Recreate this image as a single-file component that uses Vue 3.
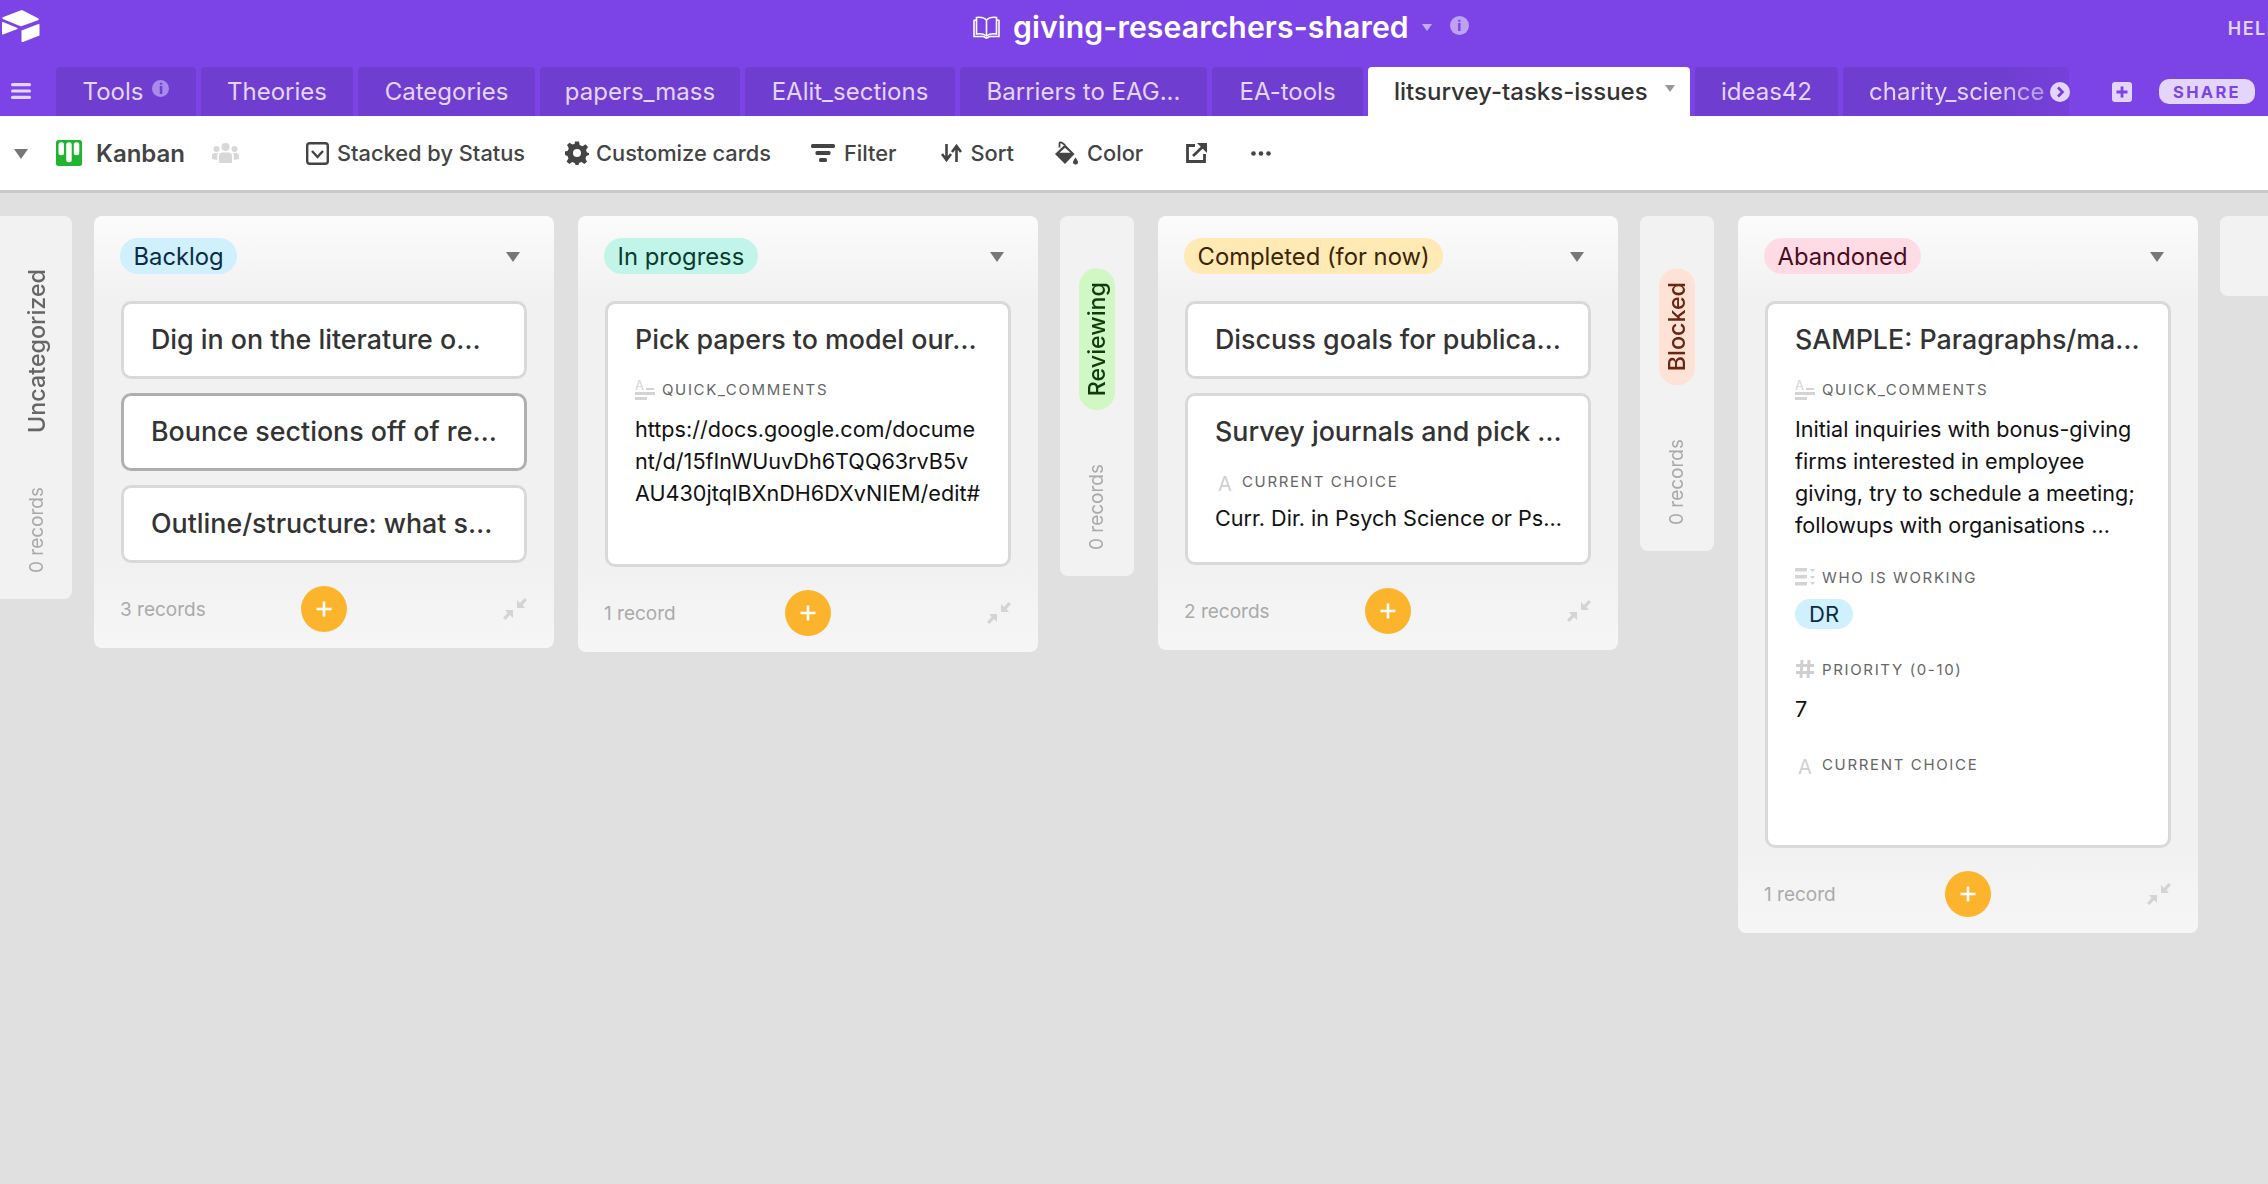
<template>
  <div class="page">
    <header class="topbar">
      <svg class="logo" viewBox="0 0 38 32" width="38" height="32" fill="#fff">
        <path d="M20.500 0.300 L36.500 8.500 Q37.500 9.500 36 10.300 L20 16 Q19 16.300 18 16 L0.800 9 Q0 8 0.800 7.300 L19 0.300 Q20 0 20.500 0.300 Z" />
        <path d="M0 12.500 Q0 11.600 1 12 L15.500 18 Q16.300 18.500 15.500 19 L1 24.500 Q0 24.800 0 23.800 Z" />
        <path d="M19.500 20.500 L36.500 14 Q37.500 13.800 37.500 14.800 L37.500 25.600 L21 32 Q19.500 32.300 19.500 31 Z" />
      </svg>
      <div class="base-title">
        <svg class="book" viewBox="0 0 27 23" width="27" height="23" fill="none" stroke="#fff" stroke-width="1.600">
          <path d="M13.500 4 C11 1.500 7 1 3.500 1.500 L3.500 18 C7 17.500 11 18 13.500 20 C16 18 20 17.500 23.500 18 L23.500 1.500 C20 1 16 1.500 13.500 4 Z" />
          <path d="M13.500 4 L13.500 20 M3.500 4 L1 4.500 L1 20.500 L10.500 20.500 L13.500 22.300 L16.500 20.500 L26 20.500 L26 4.500 L23.500 4" />
        </svg>
        <span class="base-name">giving-researchers-shared</span>
        <span class="tri small"></span>
        <span class="info big">i</span>
      </div>
      <span class="help">HELP</span>
    </header>

    <nav class="tabbar">
      <svg class="burger" viewBox="0 0 20 16" width="20" height="16" fill="#e3d5fb">
        <rect y="0" width="20" height="3.200" rx="1.500" />
        <rect y="6.400" width="20" height="3.200" rx="1.500" />
        <rect y="12.800" width="20" height="3.200" rx="1.500" />
      </svg>
      <div
        v-for="t in tabs"
        :key="t.name"
        class="tab"
        :class="{ active: t.active, fade: t.more }"
        :style="{ width: t.w + 'px' }"
      >
        <span class="tab-name">{{ t.name }}</span>
        <span v-if="t.info" class="info">i</span>
        <span v-if="t.active" class="tri grey"></span>
        <svg v-if="t.more" class="more" viewBox="0 0 20 20" width="20" height="20">
          <circle cx="10" cy="10" r="10" fill="#e3d5fb" />
          <path d="M8 5.500 L12.500 10 L8 14.500" fill="none" stroke="#703dd1" stroke-width="2.600" />
        </svg>
      </div>
      <svg class="add" viewBox="0 0 20 20" width="20" height="20">
        <rect width="20" height="20" rx="3" fill="#e3d5fb" />
        <path d="M10 4.500 V15.500 M4.500 10 H15.500" stroke="#7c44e6" stroke-width="2.800" />
      </svg>
      <button class="share">SHARE</button>
    </nav>

    <div class="toolbar">
      <span class="tri view-caret"></span>
      <svg class="kanban" viewBox="0 0 26 26" width="26" height="26">
        <rect width="26" height="26" rx="2.500" fill="#20b52e" />
        <rect x="2.500" y="2.300" width="5.500" height="13" rx="2.500" fill="#fff" />
        <rect x="10.200" y="2.300" width="5.500" height="20" rx="2.500" fill="#fff" />
        <rect x="17.800" y="2.300" width="5.500" height="13" rx="2.500" fill="#fff" />
      </svg>
      <span class="view-name">Kanban</span>
      <svg class="people" viewBox="0 0 27 20" width="27" height="20" fill="#d8d8d8">
        <circle cx="13.500" cy="4" r="4" />
        <circle cx="4.500" cy="6" r="3" />
        <circle cx="22.500" cy="6" r="3" />
        <path d="M7 20 V13 Q7 9.500 10.500 9.500 H16.500 Q20 9.500 20 13 V20 Z" />
        <path d="M0 16 V12.500 Q0 10 3 10 H6 Q5.200 11 5.200 13 V17 Z M27 16 V12.500 Q27 10 24 10 H21 Q21.800 11 21.800 13 V17 Z" />
      </svg>
      <span class="tool stacked">
        <svg viewBox="0 0 23 23" width="23" height="23" fill="none" stroke="#444" stroke-width="2.400">
          <rect x="1.200" y="1.200" width="20.600" height="20.600" rx="2.500" />
          <path d="M6 9 L11.500 15 L17 9" />
        </svg>
        Stacked by Status
      </span>
      <span class="tool custom">
        <svg viewBox="0 0 24 24" width="24" height="24" fill="#444">
          <path d="M10 0.500 H14 L14.700 4 L17.500 5.200 L20.500 3.200 L23 6 L21 9 L22 11.600 L24 12 V14 L21.300 15 L20.500 17.700 L22 20.700 L19.300 23 L16.500 21 L14 22 L13.500 24 H10.500 L9.800 22 L7.200 21 L4.300 23 L1.500 20.500 L3.500 17.500 L2.500 15 L0 14 V10.500 L2.800 9.700 L3.800 7.300 L2 4 L4.500 1.800 L7.500 3.500 L9.700 2.700 Z M12 8 A4 4 0 1 0 12 16 A4 4 0 1 0 12 8 Z" fill-rule="evenodd" />
        </svg>
        Customize cards
      </span>
      <span class="tool filter">
        <svg viewBox="0 0 24 18" width="24" height="18" fill="#444">
          <rect width="24" height="4" rx="1.500" />
          <rect x="4.500" y="7" width="15" height="4" rx="1.500" />
          <rect x="8" y="14" width="8" height="4" rx="1.500" />
        </svg>
        Filter
      </span>
      <span class="tool sort">
        <svg viewBox="0 0 21 18" width="21" height="18" fill="none" stroke="#444" stroke-width="2.600">
          <path d="M5.500 0 V15 M1 10 L5.500 16 L10 10" />
          <path d="M15.500 18 V3 M11 8 L15.500 2 L20 8" />
        </svg>
        Sort
      </span>
      <span class="tool color">
        <svg viewBox="0 0 24 24" width="24" height="24">
          <path d="M11 3.500 L20.500 13 L11 23 L1 13 Z" fill="#444" />
          <path d="M11 6.800 L16.500 11.800 H5.500 Z" fill="#fff" />
          <path d="M5.500 6.500 V2.500 Q5.500 0.800 7.500 1.500 L11 4" fill="none" stroke="#444" stroke-width="1.800" />
          <path d="M21.500 16.500 Q24 20 24 21 A2.500 2.500 0 0 1 19 21 Q19 20 21.500 16.500 Z" fill="#444" />
        </svg>
        Color
      </span>
      <svg class="export" viewBox="0 0 21 20" width="21" height="20" fill="none" stroke="#444" stroke-width="2.800">
        <path d="M9 2.500 H1.500 V18.500 H18.500 V11" />
        <path d="M7 13 L18 2.500" />
        <path d="M11 0 H21 V10 Z" fill="#444" stroke="none" />
      </svg>
      <svg class="dots" viewBox="0 0 20 5" width="20" height="5" fill="#444">
        <circle cx="2.500" cy="2.500" r="2.300" />
        <circle cx="10" cy="2.500" r="2.300" />
        <circle cx="17.500" cy="2.500" r="2.300" />
      </svg>
    </div>

    <main class="board">
      <template v-for="(col, i) in columns" :key="i">
        <section v-if="col.stack" class="stack" :class="col.cls">
          <span v-if="col.pill" class="pill vertical" :class="col.pill">{{ col.name }}</span>
          <span v-else class="plain-name">{{ col.name }}</span>
          <span class="stack-count">0 records</span>
        </section>

        <section v-else class="col" :class="col.cls">
          <div class="col-head">
            <span class="pill" :class="col.pill">{{ col.name }}</span>
            <span class="tri grey head-caret"></span>
          </div>
          <div class="cards">
            <article v-for="card in col.cards" :key="card.title" class="card" :class="{ hover: card.hover }">
              <h3 class="card-title">{{ card.title }}</h3>
              <div v-for="f in card.fields || []" :key="f.label" class="field">
                <div class="field-label">
                  <span v-if="f.icon === 'long'" class="icon-long">
                    <span class="icon-long-a">A</span>
                    <i class="bar dash"></i>
                    <i class="bar wide"></i>
                    <i class="bar short"></i>
                  </span>
                  <svg v-else-if="f.icon === 'select'" viewBox="0 0 20 18" width="20" height="18" fill="#d4d4d4">
                    <rect y="0" width="12" height="3.500" />
                    <rect y="7" width="12" height="3.500" />
                    <rect y="14" width="12" height="3.500" />
                    <path d="M15 1 H20 L17.500 4 Z M15 8 H20 L17.500 11 Z M15 14 H20 L17.500 17 Z" />
                  </svg>
                  <svg v-else-if="f.icon === 'num'" viewBox="0 0 20 18" width="20" height="18" fill="none" stroke="#d0d0d0" stroke-width="3">
                    <path d="M7 0 L6 18 M14 0 L13 18 M1 5.500 H19 M1 12.500 H19" />
                  </svg>
                  <span v-else class="icon-a">A</span>
                  <span>{{ f.label }}</span>
                </div>
                <span v-if="f.tag" class="tag">{{ f.tag }}</span>
                <div v-else class="value" :class="f.cls">
                  <div v-for="line in f.lines" :key="line">{{ line }}</div>
                </div>
              </div>
            </article>
          </div>
          <div class="col-foot">
            <span class="count">{{ col.count }}</span>
            <button class="plus">
              <svg viewBox="0 0 16 16" width="16" height="16">
                <path d="M8 0.500 V15.500 M0.500 8 H15.500" stroke="#fff" stroke-width="2.600" />
              </svg>
            </button>
            <svg class="collapse" viewBox="0 0 24 22" width="24" height="22" fill="#d4d4d4">
              <path d="M14 10 V2 L17 5 L21.500 0 L24 2 L19.500 7 L22 10 Z" />
              <path d="M10 12 V20 L7 17 L2.500 22 L0 20 L4.500 15 L2 12 Z" />
            </svg>
          </div>
        </section>
      </template>
      <section class="stack next"></section>
    </main>
  </div>
</template>

<script setup>
const tabs = [
  { name: 'Tools', w: 140, info: true },
  { name: 'Theories', w: 152 },
  { name: 'Categories', w: 177 },
  { name: 'papers_mass', w: 200 },
  { name: 'EAlit_sections', w: 210 },
  { name: 'Barriers to EAG...', w: 247 },
  { name: 'EA-tools', w: 151 },
  { name: 'litsurvey-tasks-issues', w: 322, active: true },
  { name: 'ideas42', w: 143 },
  { name: 'charity_science', w: 226, more: true },
]

const comments = {
  icon: 'long',
  label: 'QUICK_COMMENTS',
}

const columns = [
  { stack: true, name: 'Uncategorized', cls: 'first' },
  {
    name: 'Backlog',
    pill: 'blue',
    cls: 'after-first',
    count: '3 records',
    cards: [
      { title: 'Dig in on the literature o…' },
      { title: 'Bounce sections off of re…', hover: true },
      { title: 'Outline/structure: what s…' },
    ],
  },
  {
    name: 'In progress',
    pill: 'teal',
    count: '1 record',
    cards: [
      {
        title: 'Pick papers to model our…',
        fields: [
          {
            ...comments,
            cls: 'tall',
            lines: ['https://docs.google.com/docume', 'nt/d/15fInWUuvDh6TQQ63rvB5v', 'AU430jtqIBXnDH6DXvNIEM/edit#'],
          },
        ],
      },
    ],
  },
  { stack: true, name: 'Reviewing', pill: 'green' },
  {
    name: 'Completed (for now)',
    pill: 'yellow',
    count: '2 records',
    cards: [
      { title: 'Discuss goals for publica…' },
      {
        title: 'Survey journals and pick …',
        fields: [
          { icon: 'text', label: 'CURRENT CHOICE', cls: 'single', lines: ['Curr. Dir. in Psych Science or Ps…'] },
        ],
      },
    ],
  },
  { stack: true, name: 'Blocked', pill: 'orange' },
  {
    name: 'Abandoned',
    pill: 'pink',
    count: '1 record',
    cards: [
      {
        title: 'SAMPLE: Paragraphs/ma…',
        fields: [
          {
            ...comments,
            lines: [
              'Initial inquiries with bonus-giving',
              'firms interested in employee',
              'giving, try to schedule a meeting;',
              'followups with organisations …',
            ],
          },
          { icon: 'select', label: 'WHO IS WORKING', tag: 'DR' },
          { icon: 'num', label: 'PRIORITY (0-10)', cls: 'num-value', lines: ['7'] },
          { icon: 'text', label: 'CURRENT CHOICE', cls: 'single', lines: ['\u00a0'] },
        ],
      },
    ],
  },
]
</script>

<style scoped>
.page {
  height: 1184px;
  overflow: hidden;
  background: #e0e0e0;
  font-family: Inter, "Liberation Sans", sans-serif;
  color: #333;
}

/* 顶部 */
.topbar {
  height: 67px;
  background: #7c44e6;
  display: flex;
  color: #fff;
  white-space: nowrap;
}
.logo {
  flex: none;
  margin: 10px 0 0 2px;
}
.base-title {
  flex: none;
  margin-left: 933px;
  display: flex;
  align-items: center;
  height: 54px;
}
.base-name {
  margin-left: 13px;
  font-size: 30.200px;
  font-weight: 600;
  letter-spacing: 0.100px;
}
.tri {
  display: inline-block;
  width: 0;
  height: 0;
  border-left: 7px solid transparent;
  border-right: 7px solid transparent;
  border-top: 10px solid #777;
}
.tri.small {
  margin-left: 13px;
  border-left-width: 5px;
  border-right-width: 5px;
  border-top: 7px solid #c7acf4;
}
.info {
  display: inline-block;
  width: 17px;
  height: 17px;
  border-radius: 50%;
  background: #a98ae9;
  color: #703dd1;
  font-size: 14px;
  font-weight: 800;
  line-height: 17px;
  text-align: center;
}
.info.big {
  margin-left: 18px;
  margin-bottom: 4px;
  width: 19px;
  height: 19px;
  line-height: 19px;
  background: #bca2f0;
  color: #7c44e6;
}
.help {
  flex: none;
  margin-left: 759px;
  padding-top: 18px;
  font-size: 18px;
  font-weight: 600;
  letter-spacing: 1.500px;
  color: #e3d5fb;
}

/* 标签栏 */
.tabbar {
  height: 49px;
  background: #7c44e6;
  display: flex;
  align-items: flex-end;
  gap: 5px;
  padding-left: 56px;
  position: relative;
  white-space: nowrap;
}
.burger {
  position: absolute;
  left: 11px;
  top: 16px;
}
.tab {
  height: 49px;
  box-sizing: border-box;
  flex: none;
  display: flex;
  align-items: center;
  justify-content: center;
  gap: 9px;
  background: #703dd1;
  border-radius: 4px 4px 0 0;
  color: #e3d5fb;
  font-size: 24px;
  position: relative;
}
.tab .info {
  margin-bottom: 7px;
}
.tab.active {
  background: #fff;
  color: #333;
  font-weight: 500;
  justify-content: flex-start;
  padding-left: 26px;
}
.tab.active .tri {
  position: absolute;
  right: 15px;
  top: 18px;
  border-left-width: 5px;
  border-right-width: 5px;
  border-top-width: 7px;
  border-top-color: #999;
}
.tab.fade {
  background: linear-gradient(90deg, #703dd1 70%, #7640da 100%);
  justify-content: flex-start;
  padding-left: 26px;
  gap: 5px;
}
.tab.fade .tab-name {
  -webkit-mask-image: linear-gradient(90deg, #000 70%, rgba(0, 0, 0, 0.55) 100%);
  mask-image: linear-gradient(90deg, #000 70%, rgba(0, 0, 0, 0.55) 100%);
}
.more {
  flex: none;
}
.add {
  margin: 0 0 14px 38px;
}
.share {
  margin: 0 0 12px 22px;
  width: 96px;
  height: 25px;
  padding: 0;
  border: none;
  border-radius: 10px;
  background: #e3d5fb;
  color: #7c44e6;
  font-family: inherit;
  font-size: 16.500px;
  font-weight: 700;
  letter-spacing: 2.300px;
}

/* 工具栏 */
.toolbar {
  height: 74px;
  background: #fff;
  border-bottom: 3px solid #c9c9c9;
  display: flex;
  align-items: center;
  white-space: nowrap;
  color: #444;
  font-size: 21.800px;
  font-weight: 500;
}
.view-caret {
  margin-left: 14px;
  margin-top: 2px;
}
.kanban {
  margin-left: 28px;
}
.view-name {
  margin-left: 14px;
  font-size: 24px;
  font-weight: 600;
}
.people {
  margin-left: 27px;
}
.tool {
  display: flex;
  align-items: center;
  gap: 9px;
}
.stacked {
  margin-left: 67px;
  gap: 8px;
}
.custom {
  margin-left: 40px;
  gap: 7px;
}
.filter {
  margin-left: 40px;
}
.sort {
  margin-left: 44px;
}
.color {
  margin-left: 40px;
}
.export {
  margin-left: 43px;
}
.dots {
  margin-left: 44px;
}

/* 看板 */
.board {
  display: flex;
  align-items: flex-start;
  padding-top: 23px;
  white-space: nowrap;
}
.col {
  flex: none;
  width: 460px;
  margin-left: 24px;
  border-radius: 8px;
  background: linear-gradient(180deg, #fbfbfb 0, #f1f1f1 85px, #f1f1f1 calc(100% - 85px), #f6f6f6 100%);
}
.col.after-first {
  margin-left: 22px;
}
.col-head {
  height: 85px;
  box-sizing: border-box;
  padding: 22px 27px 0 26px;
  display: flex;
  justify-content: space-between;
  align-items: flex-start;
}
.head-caret {
  margin: 14px 7px 0 0;
}
.pill {
  height: 36px;
  line-height: 37px;
  padding: 0 13.500px;
  border-radius: 18px;
  font-size: 23.800px;
  display: inline-block;
}
.blue { background: #d0f0fd; color: #0b2c45; }
.teal { background: #c2f5e9; color: #0b3b2e; }
.green { background: #d1f7c4; color: #0f3d0a; }
.yellow { background: #ffeab6; color: #3b2501; }
.orange { background: #fee2d5; color: #6b2613; }
.pink { background: #ffdce5; color: #4c0c1c; }

.cards {
  padding: 0 27px;
  display: flex;
  flex-direction: column;
  gap: 14px;
}
.card {
  box-sizing: border-box;
  border: 3px solid #d9d9d9;
  border-radius: 10px;
  background: #fff;
  padding: 0 0 0 27px;
}
.card:has(.field) {
  padding-bottom: 28px;
}
.card.hover {
  border-color: #b0b0b0;
}
.card-title {
  margin: 0;
  padding: 21px 0 23px;
  height: 72px;
  box-sizing: border-box;
  font-size: 26.800px;
  line-height: 28px;
  font-weight: 500;
  color: #333;
}
.field {
  margin-top: 26px;
}
.field:first-of-type {
  margin-top: 3px;
}
.field-label {
  height: 20px;
  display: flex;
  align-items: center;
  gap: 7px;
  font-size: 15px;
  font-weight: 400;
  letter-spacing: 1.650px;
  color: #666;
}
.icon-long {
  flex: none;
  position: relative;
  width: 20px;
  height: 20px;
}
.icon-long-a {
  position: absolute;
  left: 0;
  top: -2px;
  font-size: 13px;
  line-height: 16px;
  letter-spacing: 0;
  color: #d4d4d4;
}
.bar {
  position: absolute;
  background: #d4d4d4;
  height: 3px;
}
.bar.dash {
  left: 11px;
  top: 9px;
  width: 8px;
  height: 2px;
}
.bar.wide {
  left: 0;
  top: 13px;
  width: 20px;
}
.bar.short {
  left: 0;
  top: 18px;
  width: 12px;
}
.icon-a {
  width: 20px;
  text-align: center;
  font-size: 20px;
  font-weight: 400;
  letter-spacing: 0;
  color: #d0d0d0;
  padding-top: 6px;
}
.value {
  margin-top: 14px;
  font-size: 21.600px;
  line-height: 32px;
  color: #111;
}
.value.tall {
  min-height: 123px;
}
.value.single {
  margin-top: 11px;
}
.value.num-value {
  margin-top: 14px;
  padding-bottom: 3px;
}
.tag {
  display: inline-block;
  margin: 12px 0 4px;
  padding: 0 14px;
  height: 30px;
  line-height: 30px;
  border-radius: 15px;
  background: #d0f0fd;
  color: #0b2c45;
  font-size: 22px;
}
.col-foot {
  height: 85px;
  box-sizing: border-box;
  padding: 23px 27px 16px 26px;
  display: grid;
  grid-template-columns: 1fr 46px 1fr;
  align-items: center;
}
.count {
  font-size: 19px;
  color: #aaa;
}
.plus {
  width: 46px;
  height: 46px;
  padding: 0;
  border: none;
  border-radius: 50%;
  background: #fcb42c;
  display: flex;
  align-items: center;
  justify-content: center;
}
.collapse {
  justify-self: end;
}

/* 折叠的列 */
.stack {
  flex: none;
  width: 74px;
  box-sizing: border-box;
  margin-left: 22px;
  padding: 52px 0 26px;
  border-radius: 8px;
  background: #f2f2f2;
  display: flex;
  flex-direction: column;
  align-items: center;
  gap: 54px;
}
.stack.first {
  margin-left: 0;
  width: 72px;
  padding-top: 53px;
  padding-left: 2px;
  border-radius: 0 8px 8px 0;
}
.stack.next {
  width: 120px;
  height: 80px;
  padding: 0;
}
.vertical,
.plain-name,
.stack-count {
  writing-mode: vertical-rl;
  transform: rotate(180deg);
}
.pill.vertical {
  height: auto;
  width: 36px;
  line-height: 36px;
  padding: 14px 0;
  font-size: 23.300px;
  font-weight: 500;
}
.plain-name {
  font-size: 23.300px;
  font-weight: 500;
  line-height: 36px;
  color: #666;
}
.stack-count {
  font-size: 19px;
  color: #aaa;
  line-height: 30px;
}
</style>

<style>
html,
body {
  margin: 0;
  overflow: hidden;
}
</style>
